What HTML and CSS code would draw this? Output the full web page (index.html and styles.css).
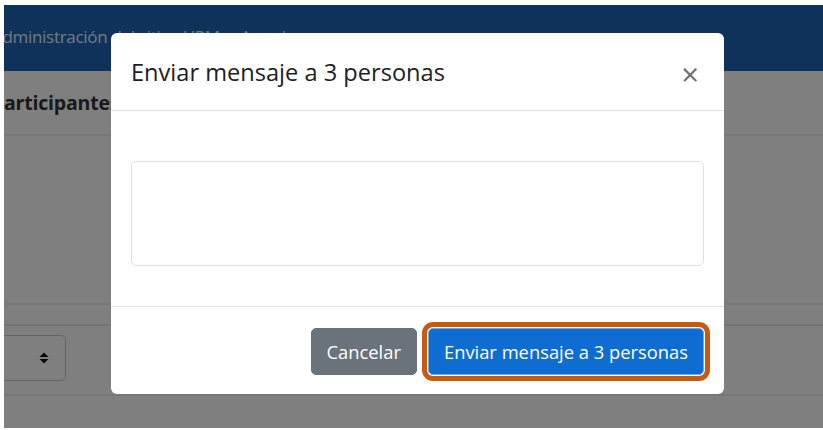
FILE: index.html
```html
<!DOCTYPE html>
<html lang="es">
<head>
<meta charset="utf-8">
<title>Enviar mensaje</title>
<link rel="stylesheet" href="styles.css">
</head>
<body>
<div class="screen">
  <div class="page">
    <header class="navbar">
      <span class="brand">Administración del sitio &nbsp; UPM &middot;&middot;&middot; Acceder</span>
    </header>
    <nav class="tabs">
      <span class="tab">Participantes</span>
    </nav>
    <div class="content">
      <div class="spacer"></div>
      <div class="row-line"></div>
      <div class="filter-row">
        <div class="select">
          <svg class="sort" width="10" height="12" viewBox="0 0 10 12"><path d="M5 0.5 L9.5 5 L0.5 5 Z M5 11.5 L9.5 7 L0.5 7 Z" fill="#111"/></svg>
        </div>
      </div>
    </div>
  </div>
  <div class="backdrop"></div>
  <div class="modal">
    <div class="modal-header">
      <h5 class="modal-title">Enviar mensaje a 3 personas</h5>
      <span class="close">&times;</span>
    </div>
    <div class="modal-body">
      <textarea class="message" aria-label="Mensaje"></textarea>
    </div>
    <div class="modal-footer">
      <button class="btn btn-secondary">Cancelar</button>
      <button class="btn btn-primary">Enviar mensaje a 3 personas</button>
    </div>
  </div>
</div>
</body>
</html>
```
FILE: styles.css
```css
html, body {
  margin: 0;
  padding: 0;
  background: #fff;
}
.screen {
  position: relative;
  margin: 5px 0 0 4px;
  width: 819px;
  height: 423px;
  overflow: hidden;
  font-family: "Open Sans", "Noto Sans", sans-serif;
}
.page {
  background: #fff;
  height: 100%;
}
.navbar {
  height: 66px;
  box-sizing: border-box;
  padding-bottom: 4px;
  background: #1c64b4;
  display: flex;
  align-items: center;
}
.brand {
  margin-left: -12px;
  color: #e4f4ff;
  font-size: 17px;
  white-space: nowrap;
  letter-spacing: -0.3px;
}
.tabs {
  height: 63px;
  border-bottom: 2px solid #eee;
  display: flex;
  align-items: center;
}
.tab {
  margin-left: -12px;
  font-weight: 700;
  font-size: 19.5px;
  color: #333;
  letter-spacing: -0.2px;
  white-space: nowrap;
}
.spacer {
  height: 167px;
  border-bottom: 2px solid #eee;
}
.row-line {
  height: 19px;
  border-bottom: 2px solid #e8e8e8;
}
.filter-row {
  height: 70px;
  border-bottom: 2px solid #eee;
  padding-top: 9px;
  box-sizing: border-box;
}
.select {
  width: 72px;
  height: 46px;
  margin-left: -10px;
  border: 1px solid #cbcbcb;
  border-radius: 5px;
  box-sizing: border-box;
  display: flex;
  align-items: center;
  justify-content: flex-end;
  padding-right: 16px;
}
.backdrop {
  position: absolute;
  inset: 0;
  background: rgba(0, 0, 0, 0.5);
}
.modal {
  position: absolute;
  left: 107px;
  top: 28px;
  width: 613px;
  height: 361px;
  background: #fff;
  border-radius: 6px;
  display: flex;
  flex-direction: column;
  box-sizing: border-box;
}
.modal-header {
  height: 78px;
  flex: none;
  border-bottom: 1px solid #dee2e6;
  box-sizing: border-box;
  display: flex;
  align-items: center;
  justify-content: space-between;
  padding: 0 25px 0 20px;
}
.modal-title {
  margin: 0;
  font-size: 23.6px;
  font-weight: 400;
  color: #1d2125;
  white-space: nowrap;
}
.close {
  font-size: 31px;
  line-height: 1;
  color: #6f6f6f;
  font-weight: 400;
  padding-top: 5px;
}
.modal-body {
  flex: none;
  height: 195px;
  padding: 50px 20px 40px;
  box-sizing: border-box;
}
.message {
  display: block;
  width: 100%;
  height: 105px;
  box-sizing: border-box;
  border: 1px solid #dee2e6;
  border-radius: 5px;
  resize: none;
  font-family: inherit;
}
.modal-footer {
  height: 88px;
  flex: none;
  border-top: 1px solid #dee2e6;
  box-sizing: border-box;
  display: flex;
  justify-content: flex-end;
  align-items: flex-start;
  gap: 11px;
  padding: 21px 20px 0;
}
.btn {
  height: 47px;
  border: 1px solid transparent;
  border-radius: 5px;
  color: #fff;
  font-family: inherit;
  font-size: 18.35px;
  padding: 0 15px;
  white-space: nowrap;
}
.btn-secondary {
  background: #6a737b;
  border-color: #6a737b;
}
.btn-primary {
  background: #0f6cd1;
  border-color: #6aa8ea;
  box-shadow: 0 0 0 1px #fff, 0 0 0 6px #c55a11;
}
```
